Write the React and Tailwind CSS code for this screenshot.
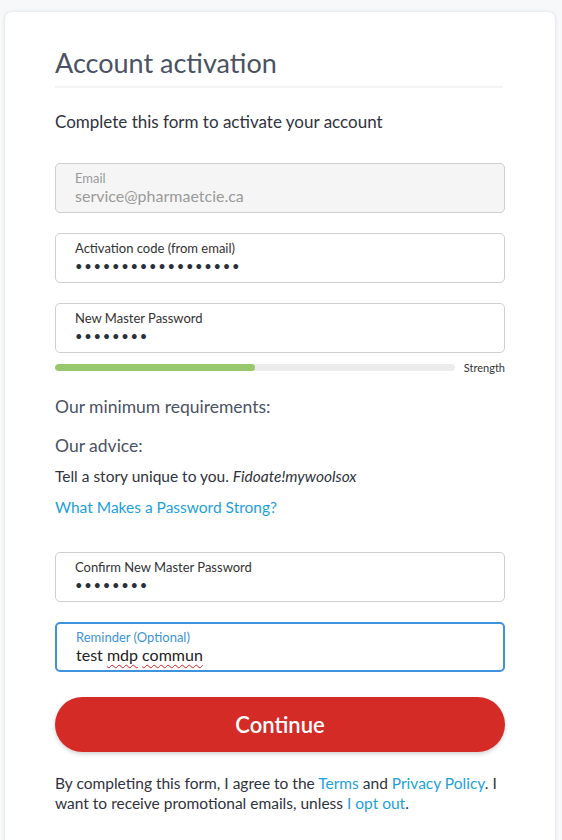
import React from 'react';

const font = { fontFamily: 'Lato, "Open Sans", sans-serif' };

const Field = ({ label, value, disabled, focused, masked }) => (
    <div
        className={`h-[50px] rounded-[5px] px-[19px] flex flex-col justify-center ${disabled ? 'bg-[#f5f5f5] border border-[#cfcfcf]' : focused ? 'bg-white border-2 border-[#3d93dc] px-[18px]' : 'bg-white border border-[#cfcfcf]'}`}
    >
        <span className={`text-[13px] leading-[16px] ${disabled ? 'text-[#9a9a9a]' : focused ? 'text-[#3d93dc]' : 'text-[#333]'}`}>
            {label}
        </span>
        {masked ? (
            <span className="text-[#2b2f3a] text-[13px] leading-[20px] tracking-[1.7px]">{value}</span>
        ) : (
            <span className={`text-[16px] leading-[20px] ${disabled ? 'text-[#9a9a9a]' : 'text-[#222]'}`}>{value}</span>
        )}
    </div>
);

export default function App() {
    return (
        <div className="min-h-[840px] bg-[#f7f8fa] px-[5px] pt-[12px] overflow-hidden" style={font}>
            <div className="w-[550px] bg-white rounded-t-[7px] shadow-[0_0_4px_rgba(0,0,0,0.12)] px-[50px] pt-[34px] pb-[30px] min-h-[830px]">
                <h1 className="text-[27px] leading-[34px] text-[#4a5263] pb-[6px] border-b-2 border-[#f3f3f3] mr-[2px]">
                    Account activation
                </h1>
                <p className="mt-[22px] text-[17px] leading-[24px] text-[#2f3340]">
                    Complete this form to activate your account
                </p>

                <div className="mt-[29px] flex flex-col gap-[20px]">
                    <Field label="Email" value="service@pharmaetcie.ca" disabled />
                    <Field label="Activation code (from email)" value="••••••••••••••••••" masked />
                    <Field label="New Master Password" value="••••••••" masked />
                </div>

                <div className="mt-[9px] flex items-center">
                    <div className="w-[400px] h-[7px] rounded-full bg-[#ececec] overflow-hidden">
                        <div className="w-[200px] h-full bg-[#97c86d] rounded-full" />
                    </div>
                    <span className="ml-[9px] text-[11px] leading-[11px] text-[#333]">Strength</span>
                </div>

                <p className="mt-[22px] text-[17.5px] leading-[24px] text-[#4a5263]">Our minimum requirements:</p>
                <p className="mt-[15px] text-[17.5px] leading-[24px] text-[#4a5263]">Our advice:</p>
                <p className="mt-[7px] text-[15.5px] leading-[22px] text-[#2f3340]">
                    Tell a story unique to you. <i>Fidoate!mywoolsox</i>
                </p>
                <a href="#" className="block mt-[9px] text-[15.5px] leading-[22px] text-[#1d9fdc]">
                    What Makes a Password Strong?
                </a>

                <div className="mt-[34px] flex flex-col gap-[20px]">
                    <Field label="Confirm New Master Password" value="••••••••" masked />
                    <Field
                        label="Reminder (Optional)"
                        focused
                        value={
                            <>
                                test <span className="underline decoration-wavy decoration-[#e02020] decoration-[1px] underline-offset-[3px]">mdp</span>{' '}
                                <span className="underline decoration-wavy decoration-[#e02020] decoration-[1px] underline-offset-[3px]">commun</span>
                            </>
                        }
                    />
                </div>

                <button className="mt-[25px] w-full h-[55px] rounded-full bg-[#d42b26] text-white text-[22px] font-semibold shadow-[0_2px_4px_rgba(0,0,0,0.18)]">
                    Continue
                </button>

                <p className="mt-[21px] text-[15.5px] leading-[20px] text-[#2f3340]">
                    By completing this form, I agree to the <a href="#" className="text-[#1d9fdc]">Terms</a> and{' '}
                    <a href="#" className="text-[#1d9fdc]">Privacy Policy</a>. I want to receive promotional emails, unless{' '}
                    <a href="#" className="text-[#1d9fdc]">I opt out</a>.
                </p>
            </div>
        </div>
    );
}
